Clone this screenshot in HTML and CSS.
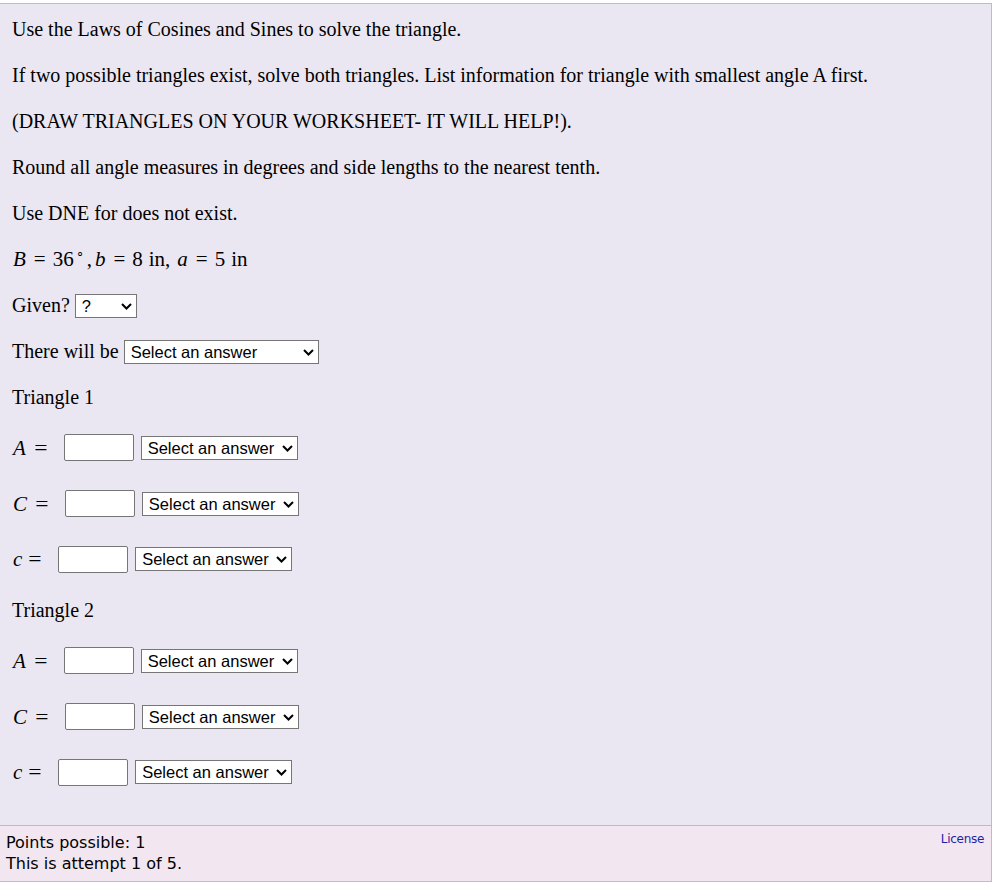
FILE: index.html
```html
<!DOCTYPE html>
<html>
<head>
<meta charset="utf-8">
<link rel="stylesheet" href="styles.css">
</head>
<body>
<div class="qbox">
  <div class="question">
    <p>Use the Laws of Cosines and Sines to solve the triangle.</p>
    <p>If two possible triangles exist, solve both triangles. List information for triangle with smallest angle A first.</p>
    <p>(DRAW TRIANGLES ON YOUR WORKSHEET- IT WILL HELP!).</p>
    <p>Round all angle measures in degrees and side lengths to the nearest tenth.</p>
    <p>Use DNE for does not exist.</p>
    <p class="given-math"><span class="mi">B</span><span class="mo">=</span><span class="mn">36</span><span class="deg">∘</span><span class="comma">,</span><span class="mi">b</span><span class="mo">=</span><span class="mn">8</span><span class="mt">in,</span><span class="mi">a</span><span class="mo">=</span><span class="mn">5</span><span class="mt">in</span></p>
    <p>Given? <span class="selwrap sw-given"><select class="sel"><option>?</option></select><svg class="chev" viewBox="0 0 11 7"><polyline points="1,1 5.5,5.5 10,1"/></svg></span></p>
    <p>There will be <span class="selwrap sw-will"><select class="sel"><option>Select an answer</option></select><svg class="chev" viewBox="0 0 11 7"><polyline points="1,1 5.5,5.5 10,1"/></svg></span></p>
    <p>Triangle 1</p>
    <div class="row"><span class="lbl"><span class="mi">A</span><span class="eq">=</span></span><input class="ans" type="text"><span class="selwrap sw-unit"><select class="sel"><option>Select an answer</option></select><svg class="chev" viewBox="0 0 11 7"><polyline points="1,1 5.5,5.5 10,1"/></svg></span></div>
    <div class="row"><span class="lbl"><span class="mi">C</span><span class="eq">=</span></span><input class="ans" type="text"><span class="selwrap sw-unit"><select class="sel"><option>Select an answer</option></select><svg class="chev" viewBox="0 0 11 7"><polyline points="1,1 5.5,5.5 10,1"/></svg></span></div>
    <div class="row"><span class="lbl lbl-c"><span class="mi">c</span><span class="eq">=</span></span><input class="ans" type="text"><span class="selwrap sw-unit"><select class="sel"><option>Select an answer</option></select><svg class="chev" viewBox="0 0 11 7"><polyline points="1,1 5.5,5.5 10,1"/></svg></span></div>
    <p>Triangle 2</p>
    <div class="row"><span class="lbl"><span class="mi">A</span><span class="eq">=</span></span><input class="ans" type="text"><span class="selwrap sw-unit"><select class="sel"><option>Select an answer</option></select><svg class="chev" viewBox="0 0 11 7"><polyline points="1,1 5.5,5.5 10,1"/></svg></span></div>
    <div class="row"><span class="lbl"><span class="mi">C</span><span class="eq">=</span></span><input class="ans" type="text"><span class="selwrap sw-unit"><select class="sel"><option>Select an answer</option></select><svg class="chev" viewBox="0 0 11 7"><polyline points="1,1 5.5,5.5 10,1"/></svg></span></div>
    <div class="row"><span class="lbl lbl-c"><span class="mi">c</span><span class="eq">=</span></span><input class="ans" type="text"><span class="selwrap sw-unit"><select class="sel"><option>Select an answer</option></select><svg class="chev" viewBox="0 0 11 7"><polyline points="1,1 5.5,5.5 10,1"/></svg></span></div>
  </div>
  <div class="footer">
    <a class="license" href="#">License</a>
    <div>Points possible: 1</div>
    <div>This is attempt 1 of 5.</div>
  </div>
</div>
</body>
</html>
```
FILE: styles.css
```css
html, body {
  margin: 0;
  padding: 0;
  background: #ffffff;
}
body {
  font-family: "Liberation Serif", "Times New Roman", serif;
  color: #000;
}
.qbox {
  margin-top: 3px;
  width: 991px;
  border: 1px solid #bcbad6;
  border-left: none;
}
.question {
  background: #eae7f2;
  padding: 12px 12px 15px 12px;
  font-size: 20px;
  line-height: 26px;
}
.question p {
  margin: 20px 0;
  height: 26px;
}
.question p:first-child {
  margin-top: 0;
}
.given-math {
  font-size: 21px;
  padding-left: 1px;
}
.mi {
  font-style: italic;
}
.mo {
  display: inline-block;
  margin: 0 7px 0 8px;
}
.deg {
  font-size: 13px;
  position: relative;
  top: -9px;
  margin-left: 2px;
}
.comma {
  margin-left: 3px;
  margin-right: 3px;
}
.mt {
  margin-left: 6px;
}
.mt + .mi {
  margin-left: 7px;
}
.selwrap {
  position: relative;
  display: inline-block;
  vertical-align: top;
  margin-top: 2px;
  height: 24px;
}
.sel {
  -webkit-appearance: none;
  appearance: none;
  box-sizing: border-box;
  display: block;
  width: 100%;
  height: 24px;
  font-family: "Liberation Sans", Arial, sans-serif;
  font-size: 16.5px;
  line-height: 22px;
  border: 1px solid #767676;
  border-radius: 0;
  background: #fff;
  color: #000;
  margin: 0;
  padding: 0 0 0 6px;
}
.chev {
  position: absolute;
  right: 5px;
  top: 9px;
  width: 11px;
  height: 7px;
  pointer-events: none;
}
.chev polyline {
  fill: none;
  stroke: #000;
  stroke-width: 2;
}
.sw-given {
  width: 62px;
}
.sw-will {
  width: 195px;
}
.sw-unit {
  width: 157px;
  margin-left: 7px;
  margin-top: 0;
}
.row {
  display: flex;
  align-items: center;
  height: 35.7px;
  margin: 20px 0;
}
.lbl {
  display: inline-flex;
  align-items: baseline;
  font-size: 21px;
  margin-right: 17px;
  padding-left: 1px;
}
.eq {
  margin-left: 9px;
  display: inline-block;
  transform: scaleX(1.12);
}
.lbl-c .eq {
  margin-left: 7px;
}
.ans {
  box-sizing: border-box;
  width: 70px;
  height: 27px;
  border: 1px solid #767676;
  border-radius: 2px;
  background: #fff;
  margin: 0;
  padding: 0 4px;
}
.footer {
  background: #f2e6f0;
  border-top: 1px solid #bcbad6;
  padding: 6px 7px 7px 6px;
  font-family: "DejaVu Sans", Verdana, sans-serif;
  font-size: 16px;
  line-height: 21px;
}
.license {
  float: right;
  font-size: 12px;
  letter-spacing: -0.3px;
  line-height: 15px;
  color: #1f1fa8;
  text-decoration: none;
}
```
